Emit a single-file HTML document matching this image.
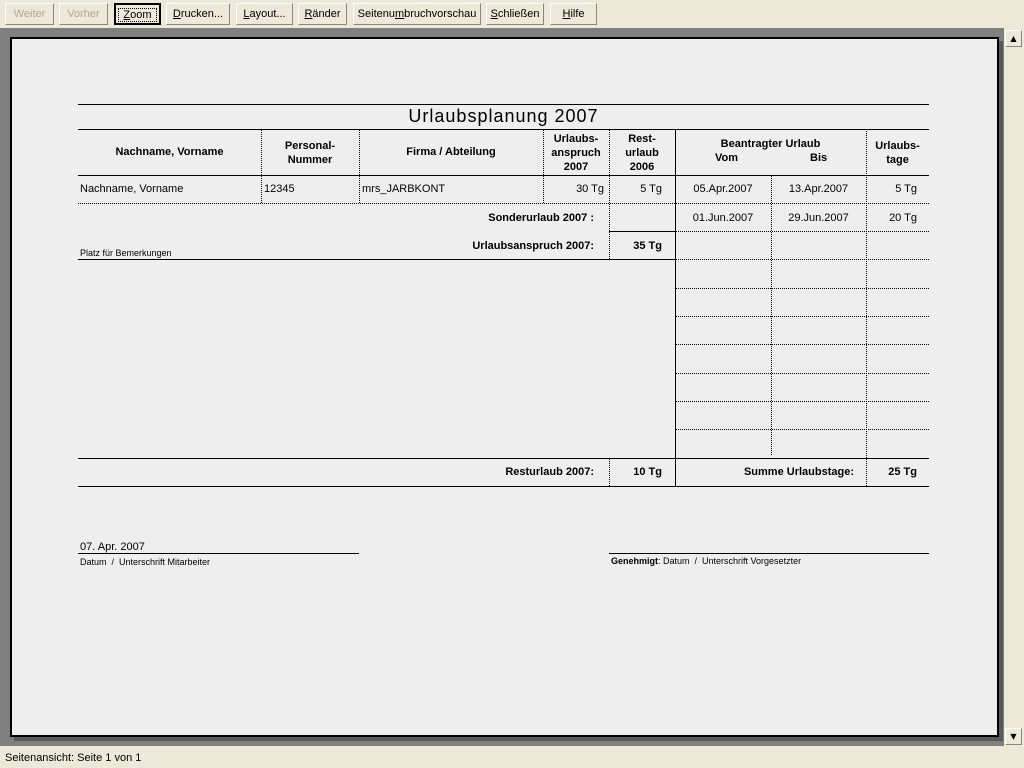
<!DOCTYPE html>
<html><head><meta charset="utf-8"><style>
*{margin:0;padding:0;box-sizing:border-box}
body{width:1024px;height:768px;overflow:hidden;background:#ece9d8;font-family:Tahoma,"DejaVu Sans","Liberation Sans",sans-serif;position:relative}
.a{position:absolute}
.btn{position:absolute;top:3px;height:22px;border:1px solid;border-color:#fff #8a8778 #8a8778 #fff;background:#ece9d8;font-size:11px;line-height:20px;text-align:center;color:#000;font-family:"Liberation Sans",sans-serif}
.btn.dis{color:#aca899}
.btn u{text-decoration:underline}
#gray{left:0;top:28px;width:1004px;height:718px;background:#808080}
#page{left:10px;top:37px;width:989px;height:700px;background:#eeeeee;border:2px solid #000;box-shadow:4px 4px 0 #5a5a5a}
.t{position:absolute;font-size:11px;color:#000;white-space:nowrap;font-family:"Liberation Sans",sans-serif}
.b{font-weight:bold}
.h{position:absolute;height:0;border-top:1px solid #000}
.hd{position:absolute;height:0;border-top:1px dotted #000}
.v{position:absolute;width:0;border-left:1px solid #000}
.vd{position:absolute;width:0;border-left:1px dotted #000}
.c{text-align:center}
.r{text-align:right}
</style></head><body>
<div class="btn dis" style="left:5px;width:49px">Weiter</div>
<div class="btn dis" style="left:59px;width:49px">Vorher</div>
<div class="btn" style="left:114px;width:47px;border:2px solid #000"><span style="border:1px dotted #000;padding:0 4px"><u>Z</u>oom</span></div>
<div class="btn" style="left:166px;width:64px"><u>D</u>rucken...</div>
<div class="btn" style="left:236px;width:57px"><u>L</u>ayout...</div>
<div class="btn" style="left:298px;width:49px"><u>R</u>änder</div>
<div class="btn" style="left:353px;width:128px">Seitenu<u>m</u>bruchvorschau</div>
<div class="btn" style="left:486px;width:58px"><u>S</u>chließen</div>
<div class="btn" style="left:550px;width:47px"><u>H</u>ilfe</div>

<div class="a" id="gray"></div>
<div class="a" style="left:1004px;top:28px;width:20px;height:718px;background:#ece9d8"></div>
<div class="a" style="left:1005px;top:30px;width:17px;height:17px;background:#ece9d8;border:1px solid;border-color:#fff #8a8778 #8a8778 #fff;font-size:8px;text-align:center;line-height:15px">▲</div>
<div class="a" style="left:1005px;top:728px;width:17px;height:17px;background:#ece9d8;border:1px solid;border-color:#fff #8a8778 #8a8778 #fff;font-size:8px;text-align:center;line-height:15px">▼</div>
<div class="a" id="page"></div>

<div class="h" style="left:78px;top:104px;width:851px"></div>
<div class="t c" style="left:78px;top:106px;width:851px;font-size:18px;letter-spacing:1px;padding-left:0">Urlaubsplanung 2007</div>
<div class="h" style="left:78px;top:129px;width:851px"></div>
<div class="h" style="left:78px;top:175px;width:851px"></div>
<div class="hd" style="left:78px;top:203px;width:851px"></div>
<div class="hd" style="left:675px;top:231px;width:254px"></div>
<div class="h" style="left:609px;top:231px;width:66px"></div>
<div class="h" style="left:78px;top:259px;width:597px"></div>
<div class="hd" style="left:675px;top:259px;width:254px"></div>
<div class="hd" style="left:675px;top:288px;width:254px"></div>
<div class="hd" style="left:675px;top:316px;width:254px"></div>
<div class="hd" style="left:675px;top:344px;width:254px"></div>
<div class="hd" style="left:675px;top:373px;width:254px"></div>
<div class="hd" style="left:675px;top:401px;width:254px"></div>
<div class="hd" style="left:675px;top:429px;width:254px"></div>
<div class="h" style="left:78px;top:458px;width:851px"></div>
<div class="h" style="left:78px;top:486px;width:851px"></div>

<div class="vd" style="left:261px;top:129px;height:74px"></div>
<div class="vd" style="left:359px;top:129px;height:74px"></div>
<div class="vd" style="left:543px;top:129px;height:74px"></div>
<div class="vd" style="left:609px;top:129px;height:130px"></div>
<div class="v" style="left:675px;top:129px;height:357px"></div>
<div class="vd" style="left:771px;top:175px;height:280px"></div>
<div class="vd" style="left:866px;top:129px;height:357px"></div>
<div class="vd" style="left:609px;top:458px;height:28px"></div>

<div class="t b c" style="left:78px;top:146px;width:183px">Nachname, Vorname</div>
<div class="t b c" style="left:261px;top:139px;width:98px;line-height:14px">Personal-<br>Nummer</div>
<div class="t b c" style="left:359px;top:146px;width:184px">Firma / Abteilung</div>
<div class="t b c" style="left:543px;top:132px;width:66px;line-height:14px">Urlaubs-<br>anspruch<br>2007</div>
<div class="t b c" style="left:609px;top:132px;width:66px;line-height:14px">Rest-<br>urlaub<br>2006</div>
<div class="t b c" style="left:675px;top:138px;width:191px">Beantragter Urlaub</div>
<div class="t b" style="left:715px;top:152px">Vom</div>
<div class="t b" style="left:810px;top:152px">Bis</div>
<div class="t b c" style="left:866px;top:139px;width:63px;line-height:14px">Urlaubs-<br>tage</div>

<div class="t" style="left:80px;top:183px">Nachname, Vorname</div>
<div class="t" style="left:264px;top:183px">12345</div>
<div class="t" style="left:362px;top:183px">mrs_JARBKONT</div>
<div class="t r" style="left:543px;top:183px;width:61px">30 Tg</div>
<div class="t r" style="left:609px;top:183px;width:53px">5 Tg</div>
<div class="t c" style="left:675px;top:183px;width:96px">05.Apr.2007</div>
<div class="t c" style="left:771px;top:183px;width:95px">13.Apr.2007</div>
<div class="t r" style="left:866px;top:183px;width:51px">5 Tg</div>

<div class="t b r" style="left:300px;top:212px;width:294px">Sonderurlaub 2007 :</div>
<div class="t c" style="left:675px;top:212px;width:96px">01.Jun.2007</div>
<div class="t c" style="left:771px;top:212px;width:95px">29.Jun.2007</div>
<div class="t r" style="left:866px;top:212px;width:51px">20 Tg</div>

<div class="t b r" style="left:300px;top:240px;width:294px">Urlaubsanspruch 2007:</div>
<div class="t b r" style="left:609px;top:240px;width:53px">35 Tg</div>
<div class="t" style="left:80px;top:248px;font-size:9px">Platz für Bemerkungen</div>

<div class="t b r" style="left:300px;top:466px;width:294px">Resturlaub 2007:</div>
<div class="t b r" style="left:609px;top:466px;width:53px">10 Tg</div>
<div class="t b r" style="left:675px;top:466px;width:179px">Summe Urlaubstage:</div>
<div class="t b r" style="left:866px;top:466px;width:51px">25 Tg</div>

<div class="t" style="left:80px;top:541px">07. Apr. 2007</div>
<div class="h" style="left:78px;top:553px;width:281px"></div>
<div class="t" style="left:80px;top:557px;font-size:9px">Datum &nbsp;/ &nbsp;Unterschrift Mitarbeiter</div>
<div class="h" style="left:609px;top:553px;width:320px"></div>
<div class="t" style="left:611px;top:556px;font-size:9px"><b>Genehmigt</b>: Datum &nbsp;/ &nbsp;Unterschrift Vorgesetzter</div>

<div class="t" style="left:5px;top:752px;font-size:11px">Seitenansicht: Seite 1 von 1</div>
</body></html>
